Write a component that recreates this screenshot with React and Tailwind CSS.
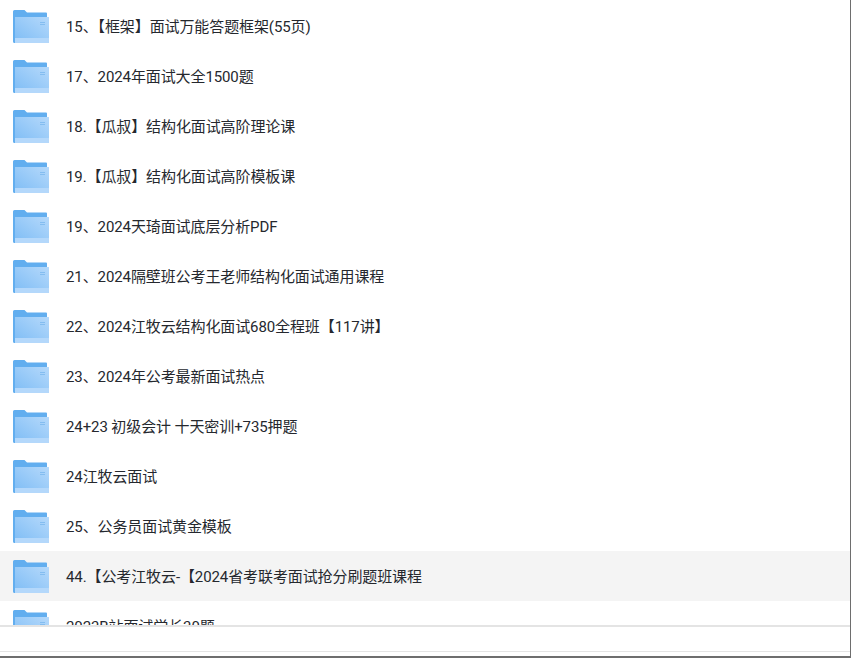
const rows = [
  "15、【框架】面试万能答题框架(55页)",
  "17、2024年面试大全1500题",
  "18.【瓜叔】结构化面试高阶理论课",
  "19.【瓜叔】结构化面试高阶模板课",
  "19、2024天琦面试底层分析PDF",
  "21、2024隔壁班公考王老师结构化面试通用课程",
  "22、2024江牧云结构化面试680全程班【117讲】",
  "23、2024年公考最新面试热点",
  "24+23 初级会计 十天密训+735押题",
  "24江牧云面试",
  "25、公务员面试黄金模板",
  "44.【公考江牧云-【2024省考联考面试抢分刷题班课程",
  "2023B站面试学长30题",
];

function FolderIcon() {
  return (
    <svg width="36" height="33" viewBox="0 0 36 33" className="mt-px shrink-0">
      <defs>
        <linearGradient id="folderFront" x1="0" y1="1" x2="1" y2="0">
          <stop offset="0" stopColor="#7dbcf5" />
          <stop offset="1" stopColor="#b5d9fb" />
        </linearGradient>
      </defs>
      <path d="M0 1.500Q0 0 1.500 0H11.500L14 2.500H33Q34 2.500 34 3.500V33H1.500Q0 33 0 31.500Z" fill="#62aeef" />
      <path d="M2 7H36V33H2Z" fill="url(#folderFront)" />
      <path d="M2 28H36V33H2Z" fill="#b4d8fb" />
      <path d="M27 12.500H32M27 14.500H32" stroke="#84bdf0" strokeWidth="1" />
    </svg>
  );
}

export default function App() {
  return (
    <div className="h-[658px] w-[851px] overflow-hidden bg-[#6e6e6e] font-['Roboto','Noto_Sans_CJK_SC',sans-serif]">
      <div className="h-[656px] w-[850px] overflow-hidden bg-white">
        <div className="h-[625px] overflow-hidden pt-px">
          {rows.map((name, i) => (
            <div
              key={name}
              className={`flex h-[50px] items-center gap-[17px] pl-[13px] text-[15px] tracking-[-0.1px] text-[#25282e] ${i === 11 ? "bg-[#f4f4f4]" : ""}`}
            >
              <FolderIcon />
              <span className="mt-[2px] whitespace-nowrap">{name}</span>
            </div>
          ))}
        </div>
        <div className="h-[26px] border-t-2 border-[#e4e4e4]" />
        <div className="h-[5px] border-t border-[#e4e4e4]" />
      </div>
    </div>
  );
}
